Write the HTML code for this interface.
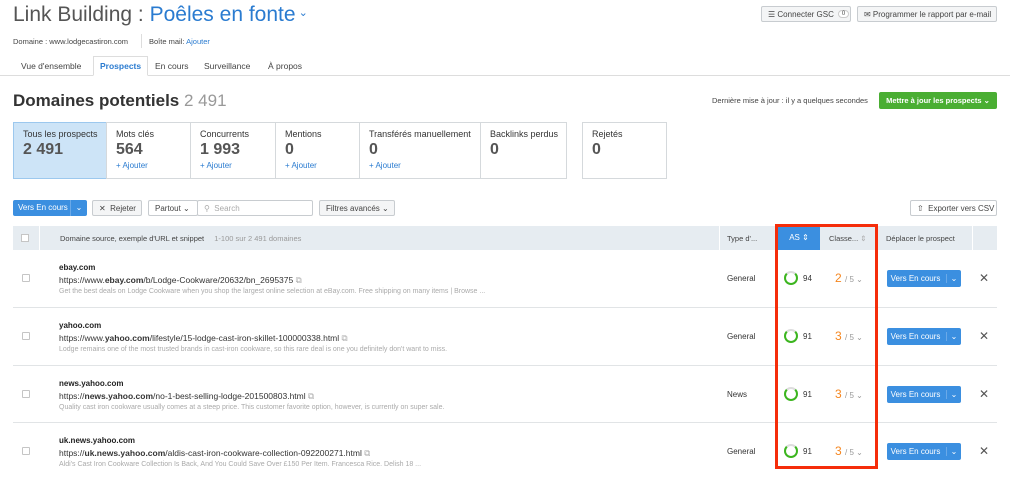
<!DOCTYPE html>
<html><head><meta charset="utf-8"><style>
*{box-sizing:border-box;margin:0;padding:0}
body{width:1010px;height:473px;overflow:hidden;background:#fff;font-family:"Liberation Sans",sans-serif;color:#333;position:relative}
.a{position:absolute;white-space:nowrap}
.btn{position:absolute;border:1px solid #c8ccd0;background:#f4f5f6;border-radius:2px;font-size:8px;color:#444;display:flex;align-items:center;padding-left:6px;white-space:nowrap}
.card{position:absolute;top:122px;height:57px;border:1px solid #d5d9dc;padding:6px 9px;font-size:9px;color:#333;white-space:nowrap;overflow:hidden}
.card b{display:block;font-size:16px;color:#555;margin-top:2px;font-weight:bold}
.card i{font-style:normal;color:#2a7bd0;font-size:8px;display:block;margin-top:2px}
.row{position:absolute;left:13px;width:984px;height:57px;border-top:1px solid #e1e4e6}
.cb{position:absolute;left:9px;top:24px;width:8px;height:8px;border:1px solid #c5c5c5;border-radius:1px}
.dom{position:absolute;left:46px;top:13px;font-size:8px;font-weight:bold;color:#222}
.url{position:absolute;left:46px;top:25px;font-size:8.5px;color:#333;white-space:nowrap}
.snip{position:absolute;left:46px;top:38px;font-size:7px;color:#aaa;white-space:nowrap}
.typ{position:absolute;left:714px;top:24px;font-size:8px}
.ring{position:absolute;left:771px;top:21px;width:14px;height:14px;border:2.5px solid #3cb51f;border-radius:50%;border-top-color:#ddd;border-right-color:#3cb51f}
.as{position:absolute;left:790px;top:24px;font-size:8px}
.cl{position:absolute;left:822px;top:21px;font-size:12px;color:#f5861f}
.cl span{font-size:8px;color:#999}
.vb{position:absolute;left:874px;top:20px;width:74px;height:17px;background:#3b8fe0;border-radius:2px;color:#fff;font-size:8px;display:flex;align-items:center;white-space:nowrap}
.vb s{text-decoration:none;flex:1;text-align:center;border-right:1px solid #6aa9e8;padding-right:2px}
.vb u{text-decoration:none;width:14px;text-align:center;font-size:8px}
.x{position:absolute;left:966px;top:21px;font-size:12px;color:#555}
</style></head><body>
<div class="a" style="left:13px;top:3px;font-size:21px;color:#555">Link Building : <span style="color:#2a7bd0">Poêles en fonte</span><span style="color:#2a7bd0;font-size:11px;vertical-align:5px"> ⌄</span></div>
<div class="a" style="left:13px;top:37px;font-size:7.5px;color:#444">Domaine : www.lodgecastiron.com</div>
<div class="a" style="left:141px;top:34px;height:14px;border-left:1px solid #ddd"></div>
<div class="a" style="left:149px;top:37px;font-size:7.5px;color:#444">Boîte mail: <span style="color:#2a7bd0">Ajouter</span></div>
<div class="btn" style="left:761px;top:6px;width:90px;height:16px">☰ Connecter GSC <span style="border:1px solid #ccc;border-radius:6px;padding:0 3px;margin-left:4px;background:#fff;font-size:6px">0</span></div>
<div class="btn" style="left:857px;top:6px;width:140px;height:16px">✉ Programmer le rapport par e-mail</div>
<div class="a" style="left:0;top:75px;width:1010px;border-top:1px solid #ddd"></div>
<div class="a" style="left:93px;top:56px;width:55px;height:20px;border:1px solid #ddd;border-bottom:1px solid #fff;background:#fff"></div>
<div class="a" style="left:21px;top:61px;font-size:8.5px;color:#444">Vue d'ensemble</div>
<div class="a" style="left:100px;top:61px;font-size:8.5px;color:#2a7bd0;font-weight:bold">Prospects</div>
<div class="a" style="left:155px;top:61px;font-size:8.5px;color:#444">En cours</div>
<div class="a" style="left:204px;top:61px;font-size:8.5px;color:#444">Surveillance</div>
<div class="a" style="left:268px;top:61px;font-size:8.5px;color:#444">À propos</div>
<div class="a" style="left:13px;top:91px;font-size:17px;font-weight:bold;color:#333">Domaines potentiels <span style="font-weight:normal;color:#999">2 491</span></div>
<div class="a" style="left:712px;top:96px;font-size:7.5px;color:#444">Dernière mise à jour : il y a quelques secondes</div>
<div class="a" style="left:879px;top:92px;width:118px;height:17px;background:#4aae33;border-radius:2px;color:#fff;font-size:7.5px;font-weight:bold;text-align:center;line-height:17px">Mettre à jour les prospects ⌄</div>
<div class="card" style="left:13px;width:94px;background:#cde4f7;border-color:#9cc8ee">Tous les prospects<b>2 491</b></div>
<div class="card" style="left:106px;width:85px">Mots clés<b>564</b><i>+ Ajouter</i></div>
<div class="card" style="left:190px;width:86px">Concurrents<b>1 993</b><i>+ Ajouter</i></div>
<div class="card" style="left:275px;width:85px">Mentions<b>0</b><i>+ Ajouter</i></div>
<div class="card" style="left:359px;width:122px">Transférés manuellement<b>0</b><i>+ Ajouter</i></div>
<div class="card" style="left:480px;width:87px">Backlinks perdus<b>0</b></div>
<div class="card" style="left:582px;width:85px">Rejetés<b>0</b></div>
<div class="a" style="left:13px;top:200px;width:74px;height:16px;background:#3b8fe0;border-radius:2px;color:#fff;font-size:8px;line-height:16px;padding-left:5px">Vers En cours<span style="position:absolute;left:57px;top:0;width:17px;border-left:1px solid #6aa9e8;text-align:center">⌄</span></div>
<div class="btn" style="left:92px;top:200px;width:50px;height:16px">✕&nbsp; Rejeter</div>
<div class="btn" style="left:148px;top:200px;width:50px;height:16px;background:#fff">Partout ⌄</div>
<div class="btn" style="left:197px;top:200px;width:116px;height:16px;background:#fff;color:#aaa">⚲&nbsp; Search</div>
<div class="btn" style="left:319px;top:200px;width:76px;height:16px">Filtres avancés ⌄</div>
<div class="btn" style="left:910px;top:200px;width:87px;height:16px;background:#fff">⇧&nbsp; Exporter vers CSV</div>
<div class="a" style="left:13px;top:226px;width:984px;height:24px;background:#e6ecf1"></div>
<div class="a" style="left:39px;top:226px;height:24px;border-left:1px solid #fff"></div>
<div class="a" style="left:21px;top:234px;width:8px;height:8px;border:1px solid #c5c5c5;background:#fff"></div>
<div class="a" style="left:60px;top:234px;font-size:7.5px;color:#444">Domaine source, exemple d'URL et snippet <span style="color:#999;margin-left:8px">1-100 sur 2 491 domaines</span></div>
<div class="a" style="left:719px;top:226px;height:24px;border-left:1px solid #fff"></div>
<div class="a" style="left:727px;top:234px;font-size:7.5px;color:#444">Type d'...</div>
<div class="a" style="left:778px;top:226px;width:42px;height:24px;background:#3b8fe0;color:#fff;font-size:8px;text-align:center;line-height:24px">AS ⇕</div>
<div class="a" style="left:829px;top:234px;font-size:7.5px;color:#444">Classe... <span style="color:#aaa">⇕</span></div>
<div class="a" style="left:886px;top:234px;font-size:7.5px;color:#444">Déplacer le prospect</div>
<div class="a" style="left:972px;top:226px;height:24px;border-left:1px solid #fff"></div>

<div class="row" style="top:250px;border-top:none"><div class="cb"></div><div class="dom">ebay.com</div><div class="url">https://www.<b>ebay.com</b>/b/Lodge-Cookware/20632/bn_2695375 <span style="color:#aaa">⧉</span></div><div class="snip">Get the best deals on Lodge Cookware when you shop the largest online selection at eBay.com. Free shipping on many items | Browse ...</div><div class="typ">General</div><div class="ring"></div><div class="as">94</div><div class="cl">2 <span>/ 5 ⌄</span></div><div class="vb"><s>Vers En cours</s><u>⌄</u></div><div class="x">✕</div></div>
<div class="row" style="top:307px"><div class="cb"></div><div class="dom">yahoo.com</div><div class="url">https://www.<b>yahoo.com</b>/lifestyle/15-lodge-cast-iron-skillet-100000338.html <span style="color:#aaa">⧉</span></div><div class="snip">Lodge remains one of the most trusted brands in cast-iron cookware, so this rare deal is one you definitely don't want to miss.</div><div class="typ">General</div><div class="ring"></div><div class="as">91</div><div class="cl">3 <span>/ 5 ⌄</span></div><div class="vb"><s>Vers En cours</s><u>⌄</u></div><div class="x">✕</div></div>
<div class="row" style="top:365px"><div class="cb"></div><div class="dom">news.yahoo.com</div><div class="url">https://<b>news.yahoo.com</b>/no-1-best-selling-lodge-201500803.html <span style="color:#aaa">⧉</span></div><div class="snip">Quality cast iron cookware usually comes at a steep price. This customer favorite option, however, is currently on super sale.</div><div class="typ">News</div><div class="ring"></div><div class="as">91</div><div class="cl">3 <span>/ 5 ⌄</span></div><div class="vb"><s>Vers En cours</s><u>⌄</u></div><div class="x">✕</div></div>
<div class="row" style="top:422px"><div class="cb"></div><div class="dom">uk.news.yahoo.com</div><div class="url">https://<b>uk.news.yahoo.com</b>/aldis-cast-iron-cookware-collection-092200271.html <span style="color:#aaa">⧉</span></div><div class="snip">Aldi's Cast Iron Cookware Collection Is Back, And You Could Save Over £150 Per Item. Francesca Rice. Delish 18 ...</div><div class="typ">General</div><div class="ring"></div><div class="as">91</div><div class="cl">3 <span>/ 5 ⌄</span></div><div class="vb"><s>Vers En cours</s><u>⌄</u></div><div class="x">✕</div></div>

<div class="a" style="left:775px;top:224px;width:103px;height:245px;border:3px solid #f52d0a"></div>
</body></html>
